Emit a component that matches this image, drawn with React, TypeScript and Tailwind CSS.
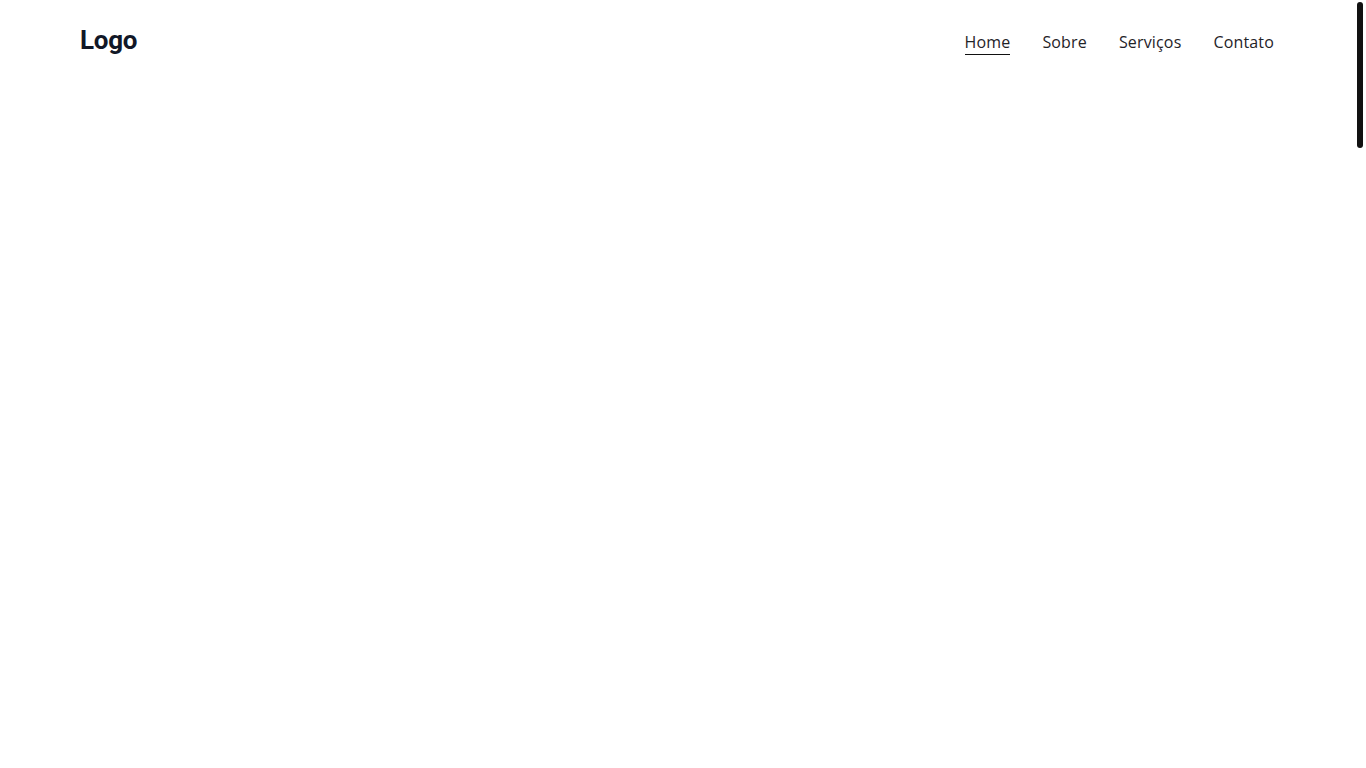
import React from 'react';

const links = ['Home', 'Sobre', 'Serviços', 'Contato'];

const Header: React.FC = () => {
  return (
    <header className="flex justify-between items-center pl-20 pr-[92px] pt-6 pb-[26px]">
      <a href="#" className="text-[26px] leading-8 font-bold text-[#111827] tracking-[-0.01em]" style={{ fontFamily: 'Roboto, Arial, sans-serif' }}>
        Logo
      </a>
      <nav className="flex items-center gap-8 pt-[4px] tracking-[0.01em]" style={{ fontFamily: '"Open Sans", sans-serif' }}>
        {links.map((link, i) => (
          <a
            key={link}
            href="#"
            className={
              i === 0
                ? 'text-base leading-6 text-[#1f2328] border-b border-[#111]'
                : 'text-base leading-6 text-[#1f2328] border-b border-transparent'
            }
          >
            {link}
          </a>
        ))}
      </nav>
    </header>
  );
};

const App: React.FC = () => {
  return (
    <div className="h-screen overflow-hidden bg-white">
      <Header />
      <main className="flex-1" />
      {/* scroll thumb overlay */}
      <div className="fixed top-[2px] right-[3px] w-[6px] h-[146px] rounded-full bg-[#111]" />
    </div>
  );
};

export default App;
